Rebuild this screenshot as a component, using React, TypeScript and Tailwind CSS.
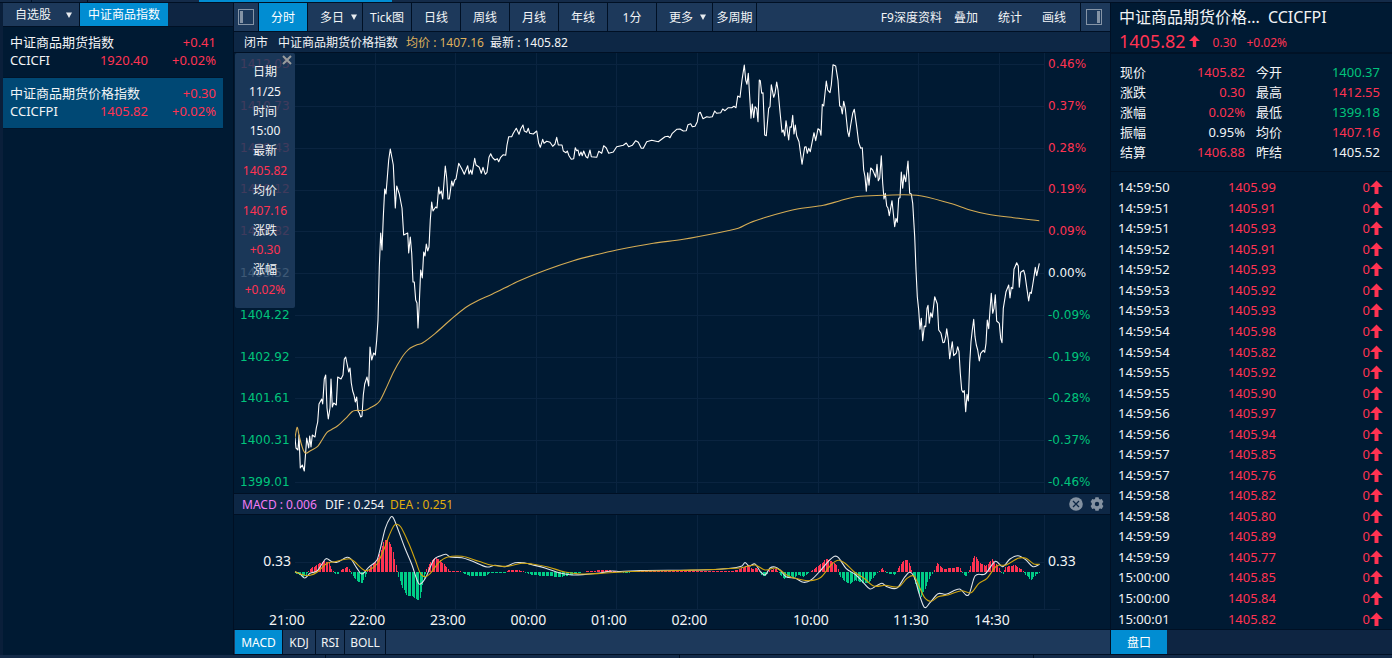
import React from "react";

const PRICE =
  "295,438 296,448 298,450 299,435 300.3,468 302.3,465 304.3,471 306.7,438 308.7,448 309.7,436 311,447 312.3,435 315,437 316.3,428 317.7,422 319,404 321.7,399 322.7,404 324.3,379 325.7,375 327,408 328.3,419 330,408 331,379 332.3,407 333.7,403 336.3,405 337.7,377 341,379 343,375 344.3,359 345.7,357 348.7,372 350,368 351.3,383 352.7,391 354,395 355.3,402 356.7,397 358,411 359.3,413 360.7,417 362,416 363.3,395 364.7,384 367,377 368.7,386 370,347 371.7,360 373.7,353 375.3,355 376.7,340 378,320 379.3,267 380.7,233 382,250 383.3,217 384.7,189 386,194 388.7,160 390.3,149 392,158 393.3,165 395.3,208 396.7,186 399.3,194 402,208 403.7,235 407.7,233 408.7,253 410.3,237 411.7,253 413,282 414.3,282 415.7,300 417,303 418,328 419.3,303 420.7,270 422.3,278 423.7,252 425,256 426.3,244 427.7,251 429,247 430.3,220 431.7,202 433,211 435.7,207 437,208 438.7,187 439.7,194 441.3,191 442.7,199 445.3,166 446.7,178 448,199 449.3,199 451.7,181 453,186 454.7,180 456,179 458.7,163.3 462,169.3 464.3,174.3 467.7,165.7 469,174 470.7,170 472,174.3 474.7,158.3 476,165 479.3,167.3 481.3,173.3 483,167.3 485.3,174.3 487,172.3 489,157.3 490.7,153.7 492.3,157.3 495,160 497.3,158.7 498.7,161.7 500.7,157.3 503.3,154.7 505.7,155.3 507,145 508.7,136.7 511.7,136.7 513.3,133.3 516.3,128.3 519,134.3 520.7,129 523,125 524.3,131 526.7,132.3 528.3,128.3 529.7,133.3 533.3,134 536.7,131 538.7,143.3 540.3,147.3 542.7,139.3 544,143.3 546.7,141.3 550,142.3 552.7,146.3 555,144 556.7,137.3 558.3,145 562,145 563.3,151 566,152.7 567.3,151 569,155.7 571.3,159.3 573.7,158.7 575.3,147.7 576.7,150.7 578,150 579.3,155.7 581,152 582.3,155.7 583.7,151 586,156.7 587.7,158 590,150 591.3,156.7 596.7,157.3 598.7,151.3 601.7,153.3 603.7,145.7 606.3,148 608.7,153.3 613.3,152 616.7,146.7 623.3,145.3 626.3,143 628.7,146.7 632.3,145.3 635.7,140.7 638.3,142.3 641.3,148.3 643.3,148.3 646.7,141.7 651.7,140.3 658.3,141.7 665,136.7 668,136.3 670,137.7 672.3,133.3 676.7,129.3 680,129 683.3,131 686.3,130.7 688,124.7 690.7,123.7 692.3,126.7 695,126.3 697.3,121.7 698.7,113.3 700.3,112.3 703,118.7 706.7,116.7 709.3,117.3 712.3,116.7 714.7,111 716.7,113.3 720.7,112.7 722.7,109 725,110.7 728.3,107.7 731.7,107.7 734,106.3 736,107.7 737.7,96 740,97.3 742,80 744.3,65 745.7,80 747,84.3 748.3,73.3 749.7,96.7 751,118.3 752.3,104 753.7,117.7 755,106.7 756.7,108.7 758,121.7 759.3,80 760.3,80.7 761.7,93.3 763,92.7 764.7,135 766.3,135.7 768.7,108.3 770,106.7 771.3,84.7 773.7,97.3 775,93.3 776.7,82 778,90 780,111.7 782,132.3 783.3,130 784.7,136 786,120.7 788.7,140 790,126.7 791.3,127.3 792.7,115.3 794,134 795.3,125 796.7,136 799,141.7 802,164.3 804.7,147 806,146.7 807.3,153.3 808.7,148.3 810.3,151.7 814,132.7 815.7,140.7 818,128.7 819.7,130 821,135.3 822.3,104.3 823.7,106 826.3,81 827.7,90 830,92.7 831.3,85 833,64.7 835.7,66 838,80.7 839.7,106 841,106.7 842.3,114 843.7,101.3 845.3,108.3 847.7,131.7 849,136.7 850.7,125 852.7,113.3 854.3,109.3 856.7,126.7 858.7,142.7 860.7,148.3 862.3,147.7 863.7,170 865,176.7 866.3,191.3 867.7,172.7 869,185.3 870.7,168 872.7,170 875.7,177.3 877,164.3 878.3,180.7 879.7,178.3 881.3,155.7 882.7,183.3 884,199 885.3,193.3 886.7,206 888,208 889.3,215.7 892,200.7 893.3,213.3 894.7,226.7 896,218.3 897.3,222.3 898.7,198.3 900,197.7 901.3,172 902.7,188.3 904,174.7 905.7,181.7 908,161 909.7,193.3 911.3,194 912.7,203.3 914.7,236.7 916,270 917.3,296.7 918.7,310 920,329.3 921.3,318.3 922.7,340.7 924.3,326 925.7,326.7 927,308.3 928,305.3 929.3,323.3 930.7,312.7 932.3,317.3 934.7,296.7 937.3,304 938.7,330 941,333.3 943,342.7 944.3,342.3 945.7,336.7 946.7,328.7 948.3,340 949.7,358.7 952.3,341.7 953.7,355.7 956.3,353 957.7,346.7 959,351.7 960.3,373.3 961.7,390 963,392.3 964.3,390.7 965.7,411.7 967,394.3 968.3,401 969.7,363.3 971,341.7 972.3,330 973.7,319.3 975,336.7 976.3,345 977.7,350 979.3,361 980.7,353.3 983.3,350.3 984.7,352.3 986,343.3 987.3,320 988.7,328.7 990,310 991.3,293.3 992.7,313.3 994,308.3 995.3,294.7 996.7,321 999.3,323.3 1000.7,338.3 1002,342.7 1003.3,308.3 1006,291.7 1008.7,285 1010,298 1011.3,287.3 1012.7,288.7 1014,269.3 1016.7,262.7 1018.3,266 1019.3,287.3 1020.7,272.3 1023.7,270.3 1025,275 1027,289.3 1028.7,301 1030,292.3 1031.3,293.3 1032.7,285 1034,276.7 1035.3,267.3 1036.7,275.7 1039.3,263.3";

const AVERAGE =
  "295,438 296,432 297.3,427.3 299,435 301.3,444 303.7,451 306,453.3 310.3,450.7 317.7,446.3 322,440 327,432.3 332,429.3 337.7,425.7 345.7,418.3 352,411.7 355.3,410.5 365.3,410.3 370,408 375.3,405 379.7,401 385.3,390 393.7,371.7 402,357.3 406,352 410.3,348 417,344.7 422,343.3 435.3,333.3 450.3,320 465.3,307.7 478,300.5 492,294.3 520,280.5 546.7,269.7 573.3,260.7 595,255 616.7,250 653.3,243.3 683.3,239.3 726.7,231 738.3,228.3 750,222.7 765,217.5 781.7,212.7 801.7,208.3 823.3,205.3 840,200.7 850,198 860,196.3 883.3,195.3 916.7,195.3 950,203.3 970,210 986.7,214 1013.3,217.7 1039.3,220.7";

const DIF =
  "295,571.7 300,574 304.7,578 310,573.3 317,571 322,564 326,558.7 332,561.7 337,562.3 347,557.3 351,559 357,568.3 362,574 368.7,567.3 377,560 380,550 385.3,528.3 390.3,517.7 393,517.3 397,526.7 405,548.3 412,565 417,580 419.7,584.3 425.3,578.3 433.7,560 440,556 446,554.3 450,557 462,557.7 472,561 487,567 495,565.3 505,566.7 515,562.7 525,563 532,564.7 545,568 560,573 572,575 585,574.5 600,573 612,571 620,571.5 640,570.5 700,570 728,568.5 742,566 745,562.5 749,566 755,564 760,571 765,575 770,568 775,567 780,570 786,576.7 795.6,578.3 803.4,582.3 811,580 821,570 829,560.7 834.6,556.3 838.5,557.7 846,568.3 856,575 864,583.3 870,589 876,586 882,583.3 887,586.7 897,588 905,576.7 910,572.3 914.7,578.3 919,593.3 924.4,607.3 930,602.7 938,593.7 946,594.3 959.5,589 968.5,595 975,576 985,574 995.5,561.3 1002.5,566.7 1010,559 1018,555.7 1026,560 1033,566.7 1039.5,564.3";

const DEA =
  "295,571.7 303.7,575 310.3,575.3 317,572.3 327,563.3 335,561.7 349,558.7 353.7,561 363.7,570 368.7,570 377,564 383.7,550 388.7,536.7 393.7,526 397,524.3 401,527.3 408.7,543.3 415.3,560 420.3,573.3 424.7,576.7 430.3,573.3 438.7,562.7 447,557.3 462,556.3 478.7,561.3 492,565.3 507,566.3 522,563.3 532,564 548,567 565,572 580,574 600,573.5 630,571.5 680,570.5 740,568 755,565 765,570 775,568 780,570 788,575.7 799.5,579.3 811,580.7 821,577.3 831,565 838,560.3 844.4,562.7 854,571.7 864,578.3 873.7,586 885.4,585.3 899,586.7 907,578.3 914,576 918.6,585 924.4,597.3 931.4,601.3 938,596.7 948,595 961.5,590.7 971,592.7 979,583.3 987,578.3 996.6,566 1006,565 1018,558.3 1026,558.3 1033.7,564 1039.5,564.3";

const MOMENTUM: [number, number][] = [
  [295, -1], [300, -3], [304, -5], [307, -1], [309, 2], [313, 5], [318, 8], [323, 11], [328, 10], [331, 3],
  [335, -2], [338, -2], [340, 2], [347, 5], [350, 1], [353, -5], [358, -10], [362, -11], [366, -2], [368, 2],
  [372, 7], [378, 14], [384, 32], [388, 32], [392, 24], [396, 4], [398, -4], [402, -16], [407, -24], [412, -24],
  [419, -29], [423, -10], [426, 2], [430, 10], [434, 14], [438, 13], [444, 8], [449, 1], [460, 1], [462, -1],
  [470, -4], [485, -4], [490, -1], [505, -1], [508, 2], [518, 2], [522, 1], [526, -1], [532, -3], [545, -4],
  [560, -5], [570, -3], [580, -1], [586, 1], [605, 2], [615, 1], [625, -1], [640, 1], [690, 1], [733, 1],
  [742, 4], [746, 7], [752, 3], [757, 4], [761, -3], [765, -5], [769, 2], [776, 3], [780, -3], [784, -7],
  [790, -4], [794, -6], [798, -3], [803, -5], [808, -1], [812, 2], [818, 6], [826, 13], [833, 10], [837, 6],
  [839, -3], [845, -10], [850, -12], [855, -8], [862, -11], [868, -11], [873, -5], [877, -1], [882, 4], [886, -1],
  [895, -3], [897, 2], [902, 10], [907, 13], [911, 4], [914, -8], [921, -26], [926, -14], [930, -4], [934, 2],
  [937, 9], [943, 3], [959, 5], [962, -1], [966, -5], [969, 2], [974, 17], [980, 9], [986, 6], [992, 13],
  [999, 3], [1002, -3], [1005, 5], [1015, 7], [1022, 2], [1025, -3], [1031, -8], [1036, -2], [1040, -1],
];

function histogram() {
  const bars: { x: number; v: number }[] = [];
  let k = 0;
  for (let i = 0; i < 556; i++) {
    const x = 295 + i * 1.34;
    while (k < MOMENTUM.length - 2 && MOMENTUM[k + 1][0] < x) k++;
    const [x0, v0] = MOMENTUM[k];
    const [x1, v1] = MOMENTUM[k + 1];
    const v = v0 + ((v1 - v0) * (x - x0)) / (x1 - x0);
    bars.push({ x: Math.round(x), v: Math.round(v) });
  }
  return bars.filter((b) => b.v !== 0);
}
const BARS = histogram();

/* Smooth path through the points, with horizontal thirds as control distances. */
function smooth(points: string) {
  const p = points.split(" ").map((s) => s.split(",").map(Number));
  const slope = p.map((_, i) => {
    const a = p[Math.max(0, i - 1)];
    const b = p[Math.min(p.length - 1, i + 1)];
    return (b[1] - a[1]) / (b[0] - a[0]);
  });
  let d = `M${p[0][0]} ${p[0][1]}`;
  for (let i = 1; i < p.length; i++) {
    const h = (p[i][0] - p[i - 1][0]) / 3;
    d += ` C${p[i - 1][0] + h} ${p[i - 1][1] + slope[i - 1] * h} ${p[i][0] - h} ${p[i][1] - slope[i] * h} ${p[i][0]} ${p[i][1]}`;
  }
  return d;
}

const V_GRID = [375.5, 455.5, 536.5, 616.5, 697.5, 818.5, 918.5, 999.5, 1044.5];
const H_GRID = [64, 106, 148, 190, 231, 273, 315, 357, 398, 440, 482];

const LEFT_AXIS = ["1412.03", "1410.73", "1409.43", "1408.12", "1406.82", "1405.52", "1404.22", "1402.92", "1401.61", "1400.31", "1399.01"];
const RIGHT_AXIS = ["0.46%", "0.37%", "0.28%", "0.19%", "0.09%", "0.00%", "-0.09%", "-0.19%", "-0.28%", "-0.37%", "-0.46%"];

const TIP: [string, string, boolean][] = [
  ["日期", "11/25", false],
  ["时间", "15:00", false],
  ["最新", "1405.82", true],
  ["均价", "1407.16", true],
  ["涨跌", "+0.30", true],
  ["涨幅", "+0.02%", true],
];

const WATCH = [
  { name: "中证商品期货指数", code: "CCICFI", price: "1920.40", diff: "+0.41", pct: "+0.02%", on: false },
  { name: "中证商品期货价格指数", code: "CCICFPI", price: "1405.82", diff: "+0.30", pct: "+0.02%", on: true },
];

const RED = "text-[#ff3352]";
const GREEN = "text-[#00c47c]";
const WHITE = "text-[#f2f4f6]";

const STATS: [string, string, string, string, string, string][] = [
  ["现价", "1405.82", RED, "今开", "1400.37", GREEN],
  ["涨跌", "0.30", RED, "最高", "1412.55", RED],
  ["涨幅", "0.02%", RED, "最低", "1399.18", GREEN],
  ["振幅", "0.95%", WHITE, "均价", "1407.16", RED],
  ["结算", "1406.88", RED, "昨结", "1405.52", WHITE],
];

const TICKS: [string, string][] = [
  ["14:59:50", "1405.99"], ["14:59:51", "1405.91"], ["14:59:51", "1405.93"], ["14:59:52", "1405.91"],
  ["14:59:52", "1405.93"], ["14:59:53", "1405.92"], ["14:59:53", "1405.93"], ["14:59:54", "1405.98"],
  ["14:59:54", "1405.82"], ["14:59:55", "1405.92"], ["14:59:55", "1405.90"], ["14:59:56", "1405.97"],
  ["14:59:56", "1405.94"], ["14:59:57", "1405.85"], ["14:59:57", "1405.76"], ["14:59:58", "1405.82"],
  ["14:59:58", "1405.80"], ["14:59:59", "1405.89"], ["14:59:59", "1405.77"], ["15:00:00", "1405.85"],
  ["15:00:00", "1405.84"], ["15:00:01", "1405.82"],
];

const TIMES = [
  ["21:00", "col-start-1"], ["22:00", "col-start-2"], ["23:00", "col-start-3"],
  ["00:00", "col-start-4"], ["01:00", "col-start-5"], ["02:00", "col-start-6"],
  ["10:00", "col-start-8"], ["11:30", "col-start-10"], ["14:30", "col-start-12"],
];

function UpArrow({ className }: { className: string }) {
  return (
    <svg viewBox="0 0 13 14" className={className} aria-hidden="true">
      <path d="M6.5 0.5 L13 7 H8.5 V14 H4.5 V7 H0 Z" fill="#ff3352" />
    </svg>
  );
}

function DropDown({ label, options, className, arrow }: { label: string; options: string[]; className: string; arrow: string }) {
  return (
    <label className={`relative flex items-stretch bg-[#1d395b] ${className}`}>
      <select aria-label={label} className="w-full cursor-pointer appearance-none bg-transparent text-inherit outline-none">
        {options.map((o) => (
          <option key={o}>{o}</option>
        ))}
      </select>
      <svg viewBox="0 0 6 6" className={`pointer-events-none absolute top-1/2 size-1.5 -translate-y-1/2 ${arrow}`} aria-hidden="true">
        <path d="M0 0.5 H6 L3 6 Z" fill="#e8ecf0" />
      </svg>
    </label>
  );
}

function PanelIcon({ side }: { side: "left" | "right" }) {
  return (
    <svg viewBox="0 0 16 16" className="size-4" shapeRendering="crispEdges" aria-hidden="true">
      <rect x="0.5" y="0.5" width="15" height="15" fill="none" stroke="#8594a6" />
      <rect x={side === "left" ? 2 : 11} y="2" width="3" height="12" fill="#8594a6" />
    </svg>
  );
}

function Watchlist() {
  return (
    <aside className="flex w-[234px] shrink-0 flex-col border-r border-l-[3px] border-r-[#001024] border-l-[#0a1f3a]">
      <div className="flex h-6 border-b border-[#001024] bg-[#0e2542] text-xs">
        <DropDown label="自选股" options={["自选股"]} className="w-[77px] border-r border-[#001024] pl-3" arrow="right-[7px]" />
        <button className="w-[88px] bg-[#018dd2] pt-px text-white">中证商品指数</button>
      </div>
      <ul className="w-[220px] text-[13px] leading-[18px]">
        {WATCH.map((w) => (
          <li key={w.code}>
            <button
              className={`block w-full border-b border-[#00152b] px-[7px] pt-1.5 pb-2 text-left ${w.on ? "bg-[#004874]" : ""}`}
            >
              <span className="flex justify-between">
                <span>{w.name}</span>
                <span className={RED}>{w.diff}</span>
              </span>
              <span className={`grid grid-cols-[60px_1fr_68px] ${RED}`}>
                <span className={WHITE}>{w.code}</span>
                <span className="text-right">{w.price}</span>
                <span className="text-right">{w.pct}</span>
              </span>
            </button>
          </li>
        ))}
      </ul>
    </aside>
  );
}

function Toolbar() {
  const tab = "border-r border-[#001024] w-[49px] pt-px";
  return (
    <nav className="flex h-[29px] shrink-0 border-b border-[#001024] bg-[#1d395b] text-xs">
      <button aria-label="左侧栏" className="flex w-[25px] items-center justify-center border-r border-[#001024]">
        <PanelIcon side="left" />
      </button>
      <button className={`${tab} bg-[#018dd2] text-white`}>分时</button>
      <DropDown label="多日" options={["多日"]} className="w-[55px] border-r border-[#001024] pt-px pl-3" arrow="right-[5px]" />
      <button className={tab}>Tick图</button>
      <button className={tab}>日线</button>
      <button className={tab}>周线</button>
      <button className={tab}>月线</button>
      <button className={tab}>年线</button>
      <button className={tab}>1分</button>
      <DropDown label="更多" options={["更多"]} className="w-14 border-r border-[#001024] pt-px pl-3" arrow="right-[6px]" />
      <button className="w-11 border-r border-[#001024] pt-px">多周期</button>
      <div className="ml-auto flex gap-5 pt-px pr-[14px]">
        <button className="-mr-2">F9深度资料</button>
        <button>叠加</button>
        <button>统计</button>
        <button>画线</button>
      </div>
      <button aria-label="右侧栏" className="flex w-[30px] items-center justify-center border-l border-[#001024] pr-1">
        <PanelIcon side="right" />
      </button>
    </nav>
  );
}

function axisColor(i: number) {
  return i < 5 ? RED : i === 5 ? WHITE : GREEN;
}

function PriceChart() {
  return (
    <section className="relative flex min-h-0 flex-1">
      <div className="flex w-[61px] shrink-0 flex-col justify-between pl-1.5 font-['DejaVu_Sans',sans-serif] text-xs leading-[22px]">
        {LEFT_AXIS.map((t, i) => (
          <span key={t} className={axisColor(i)}>{t}</span>
        ))}
      </div>
      <div className="relative min-w-0 flex-1">
        <svg viewBox="295 53 750 440" preserveAspectRatio="none" className="absolute inset-0 size-full" aria-label="分时走势">
          <g stroke="#0a2440" strokeWidth="1">
            {H_GRID.map((y) => (
              <line key={y} x1="295" x2="1045" y1={y + 0.5} y2={y + 0.5} />
            ))}
            {V_GRID.map((x) => (
              <line key={x} x1={x} x2={x} y1="53" y2="493" />
            ))}
          </g>
          <polyline points={PRICE} fill="none" stroke="#ffffff" strokeWidth="1.1" strokeLinejoin="round" />
          <path d={smooth(AVERAGE)} fill="none" stroke="#d4ac55" strokeWidth="1.1" />
        </svg>
      </div>
      <div className="flex w-[65px] shrink-0 flex-col justify-between pl-[3px] font-['DejaVu_Sans',sans-serif] text-xs leading-[22px]">
        {RIGHT_AXIS.map((t, i) => (
          <span key={t} className={axisColor(i)}>{t}</span>
        ))}
      </div>
      <div className="absolute top-0 left-px flex h-[255px] w-[60px] flex-col rounded-[2px] bg-[#1f3d5f]/85 pt-[9px] pb-2 text-xs">
        {TIP.map(([k, v, red]) => (
          <React.Fragment key={k}>
            <span className="flex flex-1 items-center justify-center leading-none">{k}</span>
            <span className={`flex flex-1 items-center justify-center leading-none ${red ? RED : WHITE}`}>{v}</span>
          </React.Fragment>
        ))}
        <button aria-label="关闭" className="absolute top-0.5 right-[3px]">
          <svg viewBox="0 0 10 10" className="size-2.5" aria-hidden="true">
            <path d="M1 1 L9 9 M9 1 L1 9" stroke="#9a9c9c" strokeWidth="2" />
          </svg>
        </button>
      </div>
    </section>
  );
}

function MacdChart() {
  return (
    <section className="shrink-0">
      <header className="flex h-[22px] items-center gap-1 border-y border-[#001024] bg-[#0d2745] px-2 text-xs leading-5">
        <span className="w-[79px] pt-px text-[#f27cf5]">MACD : 0.006</span>
        <span className="w-[61px] pt-px">DIF : 0.254</span>
        <span className="w-[65px] pt-px text-[#e0ae0c]">DEA : 0.251</span>
        <span className="-mr-0.5 ml-auto flex gap-[7px]">
          <button aria-label="关闭指标">
            <svg viewBox="0 0 14 14" className="size-3.5" aria-hidden="true">
              <circle cx="7" cy="7" r="6.8" fill="#8391a1" />
              <path d="M4 4 L10 10 M10 4 L4 10" stroke="#0d2745" strokeWidth="1.3" />
            </svg>
          </button>
          <button aria-label="指标设置">
            <svg viewBox="0 0 14 14" className="size-3.5" aria-hidden="true">
              <path
                fill="#8391a1"
                fillRule="evenodd"
                d="M5.4 0.3 h3.2 l0.4 1.7 1.1 0.6 1.7 -0.5 1.6 2.8 -1.2 1.2 v1.7 l1.2 1.3 -1.6 2.8 -1.7 -0.5 -1.1 0.6 -0.4 1.7 h-3.2 l-0.4 -1.7 -1.1 -0.6 -1.7 0.5 -1.6 -2.8 1.2 -1.3 v-1.7 l-1.2 -1.2 1.6 -2.8 1.7 0.5 1.1 -0.6 z M7 4.8 a2.2 2.2 0 1 0 0 4.4 a2.2 2.2 0 1 0 0 -4.4 z"
              />
            </svg>
          </button>
        </span>
      </header>
      <div className="flex h-[95px] text-sm leading-5">
        <div className="w-[61px] shrink-0 pt-9 pr-1 text-right">0.33</div>
        <div className="relative min-w-0 flex-1">
          <svg viewBox="295 515 750 95" preserveAspectRatio="none" className="absolute inset-0 size-full overflow-visible" aria-label="MACD">
            <g stroke="#0a2440" strokeWidth="1">
              <line x1="295" x2="1045" y1="562.5" y2="562.5" />
              <line x1="284" x2="1060" y1="609.5" y2="609.5" />
              {V_GRID.map((x) => (
                <line key={x} x1={x} x2={x} y1="515" y2="610" />
              ))}
              {V_GRID.slice(0, 8).map((x) => (
                <line key={x} x1={x - 10} x2={x - 10} y1="610" y2="613" />
              ))}
            </g>
            {BARS.map((b, i) => (
              <rect
                key={i}
                x={b.x}
                width="1"
                y={b.v > 0 ? 572 - b.v : 572}
                height={Math.abs(b.v)}
                fill={b.v > 0 ? "#ff3352" : "#00cd86"}
              />
            ))}
            <path d={smooth(DIF)} fill="none" stroke="#dfe4e9" strokeWidth="1.1" />
            <path d={smooth(DEA)} fill="none" stroke="#cfa510" strokeWidth="1.1" />
          </svg>
        </div>
        <div className="w-[65px] shrink-0 pt-9 pl-[3px]">0.33</div>
      </div>
      <div className="grid h-[19px] grid-cols-[80fr_81fr_80fr_81fr_80fr_81fr_41fr_80fr_20fr_80fr_1fr_80fr] pr-[78px] pl-[13px] text-center text-sm leading-[19px]">
        {TIMES.map(([t, c]) => (
          <span key={t} className={c}>{t}</span>
        ))}
      </div>
    </section>
  );
}

function QuotePanel() {
  return (
    <aside className="flex w-[282px] shrink-0 flex-col border-l border-[#001024]">
      <header className="h-[51px] shrink-0 border-b-2 border-[#001226] px-2">
        <h1 className="flex h-7 items-center gap-2 text-base">
          <span>中证商品期货价格...</span>
          <span>CCICFPI</span>
        </h1>
        <p className={`flex h-5 items-center text-xs leading-5 ${RED}`}>
          <span className="text-lg leading-5">1405.82</span>
          <UpArrow className="ml-[3px] h-3 w-[11px]" />
          <span className="ml-[13px] pt-1">0.30</span>
          <span className="ml-2.5 pt-1">+0.02%</span>
        </p>
      </header>
      <div className="h-[118px] shrink-0 border-b border-[#001226] pt-2 pr-3 pl-[9px]">
        <table className="w-full table-fixed text-[13px] leading-5">
          <tbody>
            {STATS.map(([a, av, ac, b, bv, bc]) => (
              <tr key={a}>
                <th scope="row" className="w-[50px] p-0 text-left font-normal">{a}</th>
                <td className={`w-[75px] p-0 text-right ${ac}`}>{av}</td>
                <th scope="row" className="w-[60px] p-0 pl-[11px] text-left font-normal">{b}</th>
                <td className={`p-0 text-right ${bc}`}>{bv}</td>
              </tr>
            ))}
          </tbody>
        </table>
      </div>
      <div className="min-h-0 flex-1 pt-[5px] pr-[9px] pl-[7px]">
        <table className="h-full w-full table-fixed text-[13px] leading-5">
          <tbody>
            {TICKS.map(([t, p], i) => (
              <tr key={i}>
                <td className="w-[100px] p-0">{t}</td>
                <td className={`w-[58px] p-0 text-right ${RED}`}>{p}</td>
                <td className={`p-0 ${RED}`}>
                  <span className="flex items-center justify-end">
                    0<UpArrow className="h-3.5 w-[13px]" />
                  </span>
                </td>
              </tr>
            ))}
          </tbody>
        </table>
      </div>
      <div className="flex h-[26px] shrink-0 border-y border-[#001024] bg-[#0e2542] text-xs">
        <button className="w-14 bg-[#018dd2] pt-px text-white">盘口</button>
      </div>
    </aside>
  );
}

export default function App() {
  const sub = "border-r border-[#001024] pt-px";
  return (
    <div className="flex h-screen flex-col overflow-hidden bg-[#001a33] font-['Noto_Sans','Noto_Sans_CJK_SC',sans-serif] text-[#f2f4f6]">
      <div className="flex h-[3px] shrink-0 border-b border-[#001024] bg-[#142b49]">
        <div className="w-8 border-r border-[#001024]" />
        <div className="w-14 border-r border-[#001024]" />
        <div className="w-[111px]" />
        <div className="w-[193px] bg-[#018dd2]" />
      </div>
      <div className="flex min-h-0 flex-1">
        <Watchlist />
        <main className="flex min-w-0 flex-1 flex-col">
          <Toolbar />
          <div className="flex h-[21px] shrink-0 items-center border-b border-[#001024] bg-[#0d2745] pt-px pl-2.5 text-xs leading-5">
            <span>闭市</span>
            <span className="ml-2.5">中证商品期货价格指数</span>
            <span className="ml-2 w-20 text-[#dfb05c]">均价 : 1407.16</span>
            <span className="ml-1">最新 : 1405.82</span>
          </div>
          <PriceChart />
          <MacdChart />
          <div className="flex h-[26px] shrink-0 border-y border-[#001024] bg-[#1d395b] pl-px text-xs">
            <button className={`${sub} w-12 bg-[#018dd2] text-white`}>MACD</button>
            <button className={`${sub} w-[33px]`}>KDJ</button>
            <button className={`${sub} w-[29px]`}>RSI</button>
            <button className={`${sub} w-[41px]`}>BOLL</button>
          </div>
        </main>
        <QuotePanel />
      </div>
      <div className="flex h-[3px] shrink-0 bg-[#142b49]">
        <div className="w-[326px] border-r border-[#001024]" />
        <div className="w-[354px] border-r border-[#001024]" />
        <div className="w-[354px] border-r border-[#001024]" />
      </div>
    </div>
  );
}
